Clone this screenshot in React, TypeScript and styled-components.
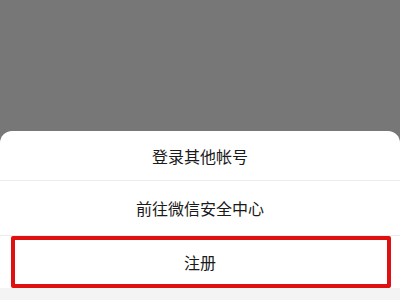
import React from "react";
import styled, { createGlobalStyle } from "styled-components";

const Global = createGlobalStyle`
  html, body { margin: 0; padding: 0; background: #777777; }
  #root { height: 300px; }
`;

const Screen = styled.div`
  width: 400px;
  height: 300px;
  display: flex;
  flex-direction: column;
  background: #777777;
  overflow: hidden;
  font-family: "Noto Sans CJK SC", "Noto Sans", sans-serif;
`;

const Overlay = styled.div`
  flex: 1;
  background: #777777;
`;

const Sheet = styled.div`
  background: #ffffff;
  border-radius: 12px 12px 0 0;
  display: flex;
  flex-direction: column;
`;

const Row = styled.div<{ $h: number; $divider?: boolean }>`
  position: relative;
  height: ${(p) => p.$h}px;
  display: flex;
  align-items: center;
  justify-content: center;
  font-size: 16px;
  color: #1a1a1a;
  border-bottom: ${(p) => (p.$divider ? "1px solid #ededed" : "none")};
`;

const Highlight = styled.div`
  position: absolute;
  left: 11px;
  right: 9px;
  top: 0;
  bottom: 0;
  border: 4px solid #e01010;
  border-radius: 2px;
  pointer-events: none;
`;

const Gap = styled.div`
  height: 12px;
  background: #f4f4f4;
`;

export default function App() {
  return (
    <>
      <Global />
      <Screen>
        <Overlay />
        <Sheet>
          <Row $h={49} $divider>登录其他帐号</Row>
          <Row $h={54} $divider>前往微信安全中心</Row>
          <Row $h={52}>
            注册
            <Highlight />
          </Row>
          <Gap />
        </Sheet>
      </Screen>
    </>
  );
}
